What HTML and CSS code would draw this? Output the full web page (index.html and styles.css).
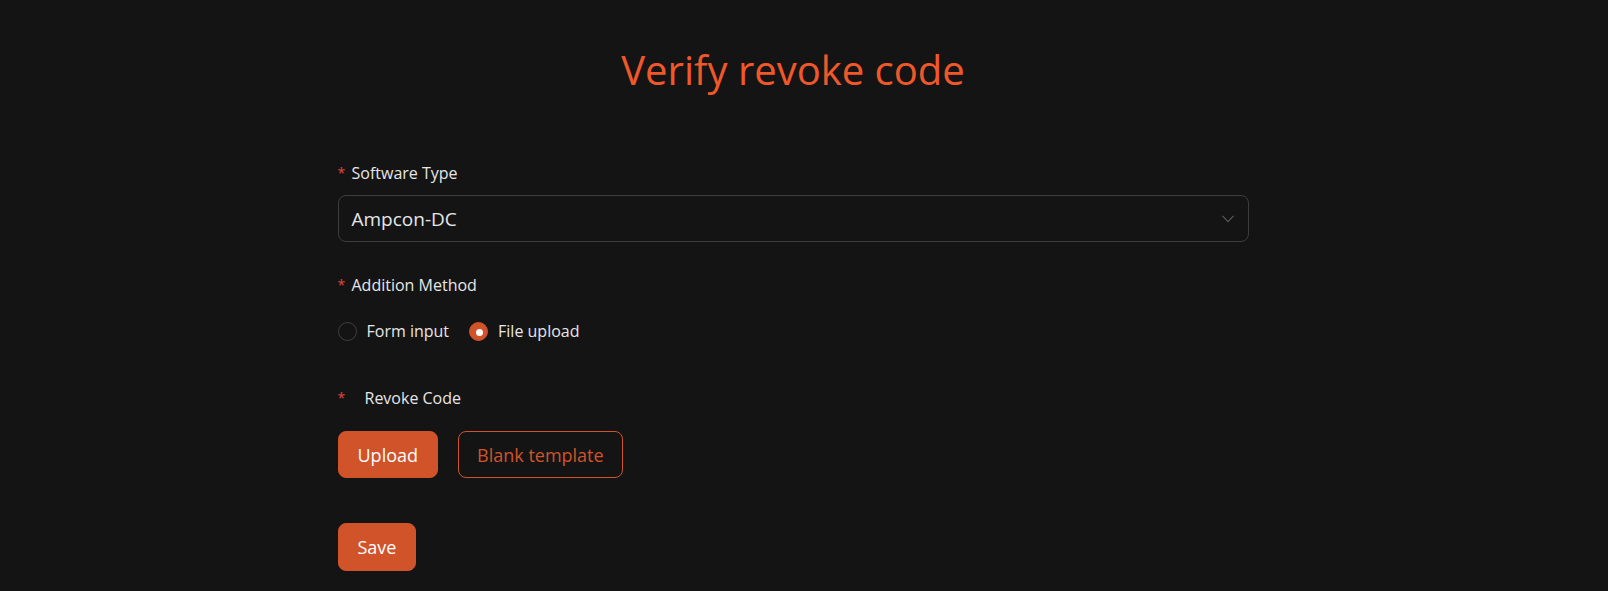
FILE: index.html
```html
<!DOCTYPE html>
<html>
<head>
<meta charset="utf-8">
<link rel="stylesheet" href="styles.css">
</head>
<body>
<div class="page">
  <h1 class="title">Verify revoke code</h1>
  <form class="form">
    <div class="field">
      <label class="label"><span class="req">*</span>Software Type</label>
      <div class="select">
        <span class="select-value">Ampcon-DC</span>
        <svg class="chev" width="12" height="8" viewBox="0 0 12 8"><path d="M0.5 0.8 L6 6.6 L11.5 0.8" fill="none" stroke="#5a5a5a" stroke-width="1.2"/></svg>
      </div>
    </div>
    <div class="field">
      <label class="label"><span class="req">*</span>Addition Method</label>
      <div class="radios">
        <span class="radio"><span class="dot"></span>Form input</span>
        <span class="radio"><span class="dot on"></span>File upload</span>
      </div>
    </div>
    <div class="field revoke">
      <label class="label"><span class="req wide">*</span>Revoke Code</label>
      <div class="buttons">
        <button type="button" class="btn primary">Upload</button>
        <button type="button" class="btn outline">Blank template</button>
      </div>
    </div>
    <div class="actions">
      <button type="button" class="btn primary save">Save</button>
    </div>
  </form>
</div>
</body>
</html>
```

FILE: styles.css
```css
html, body {
  margin: 0;
  padding: 0;
  background: #141414;
  height: 100%;
}
body {
  font-family: "Open Sans", "Noto Sans", sans-serif;
  color: #e6e6e6;
}
.page {
  padding-right: 22px;
  padding-top: 42px;
}
.title {
  margin: 0;
  text-align: center;
  font-weight: 400;
  font-size: 40px;
  line-height: 56px;
  color: #f0582a;
}
.form {
  width: 911px;
  margin: 0 auto;
  padding-top: 64px;
}
.field {
  margin-bottom: 32px;
}
.field.revoke {
  margin-bottom: 24px;
}
.label {
  display: flex;
  align-items: center;
  font-size: 16px;
  line-height: 22px;
  color: #e6e6e6;
  margin-bottom: 11px;
}
.req {
  color: #e0453d;
  font-size: 14px;
  width: 14px;
}
.req.wide {
  width: 27px;
}
.select {
  box-sizing: border-box;
  height: 47px;
  border: 1px solid #3d3d3d;
  border-radius: 8px;
  display: flex;
  align-items: center;
  justify-content: space-between;
  padding: 0 14px 0 13px;
  font-size: 19px;
}
.radios {
  display: flex;
  align-items: center;
  font-size: 16px;
  height: 24px;
  margin-top: 23px;
  margin-bottom: 44px;
}
.radio {
  display: flex;
  align-items: center;
  margin-right: 20px;
}
.dot {
  box-sizing: border-box;
  width: 19px;
  height: 19px;
  border: 1px solid #3e3e3e;
  border-radius: 50%;
  margin-right: 10px;
  position: relative;
}
.dot.on {
  background: #d0532a;
  border-color: #d0532a;
}
.dot.on::after {
  content: "";
  position: absolute;
  left: 6px;
  top: 6px;
  width: 7px;
  height: 7px;
  border-radius: 50%;
  background: #fff;
}
.revoke .label {
  margin-bottom: 22px;
}
.buttons {
  display: flex;
  gap: 20px;
}
.btn {
  box-sizing: border-box;
  height: 47px;
  border-radius: 8px;
  font-family: inherit;
  font-size: 18px;
  padding: 0 19px;
  cursor: pointer;
}
.outline {
  padding: 0 18px;
}
.primary {
  background: #d0532a;
  border: 1px solid #d0532a;
  color: #fff;
}
.outline {
  background: transparent;
  border: 1px solid #d0532a;
  color: #d0532a;
}
.actions {
  padding-top: 21px;
}
.save {
  height: 48px;
}
```
